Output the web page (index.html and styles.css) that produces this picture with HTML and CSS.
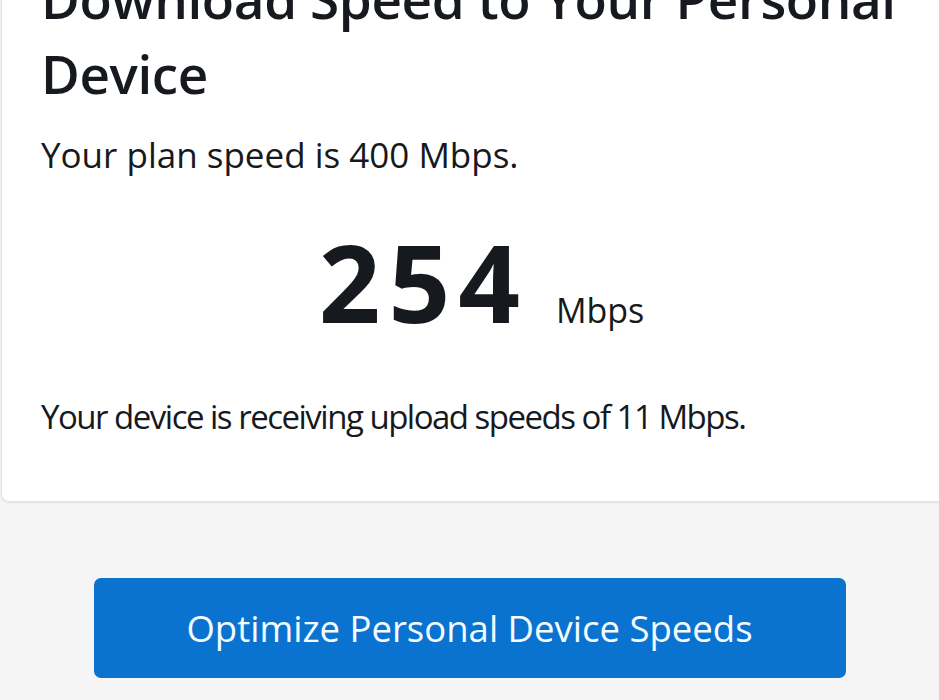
FILE: index.html
```html
<!DOCTYPE html>
<html lang="en">
<head>
<meta charset="utf-8">
<title>Download Speed</title>
<link rel="stylesheet" href="styles.css">
</head>
<body>
<main class="page">
  <section class="card">
    <h1 class="title">Download Speed to Your Personal Device</h1>
    <p class="plan">Your plan speed is 400 Mbps.</p>
    <div class="speed">
      <span class="speed-value">254</span>
      <span class="speed-unit">Mbps</span>
    </div>
    <p class="upload">Your device is receiving upload speeds of 11 Mbps.</p>
  </section>
  <div class="actions">
    <button class="btn-primary" type="button">Optimize Personal Device Speeds</button>
  </div>
</main>
</body>
</html>
```
FILE: styles.css
```css
html, body {
  margin: 0;
  padding: 0;
  overflow: hidden;
  background: #f5f5f5;
}
body {
  font-family: "Open Sans", "Noto Sans", sans-serif;
  color: #16191d;
}
.page {
  margin-top: -39px;
}
.card {
  background: #ffffff;
  margin-left: 1px;
  margin-right: -24px;
  border: 1px solid #e2e2e2;
  border-top: none;
  border-radius: 0 0 8px 8px;
  box-shadow: 0 1px 2px rgba(0,0,0,0.08);
  padding: 0 40px 0 39px;
  height: 541px;
  box-sizing: border-box;
}
.title {
  margin: 0;
  font-size: 53px;
  line-height: 75px;
  font-weight: 600;
  letter-spacing: -0.4px;
}
.plan {
  margin: 21px 0 0;
  font-size: 35px;
  line-height: 46px;
  font-weight: 400;
}
.speed {
  display: flex;
  justify-content: center;
  align-items: baseline;
  gap: 28px;
  margin-top: 44px;
}
.speed-value {
  font-size: 108px;
  font-weight: 700;
  line-height: 120px;
  letter-spacing: 8px;
}
.speed-unit {
  font-size: 34px;
  font-weight: 400;
}
.upload {
  margin: 53px 0 0;
  font-size: 33px;
  line-height: 44px;
  letter-spacing: -1.5px;
}
.actions {
  display: flex;
  justify-content: center;
  padding-top: 76px;
}
.btn-primary {
  width: 752px;
  height: 100px;
  border: none;
  border-radius: 7px;
  background: #0a73d0;
  color: #f4fbff;
  font-family: inherit;
  font-size: 36.5px;
  font-weight: 400;
  cursor: pointer;
}
```
